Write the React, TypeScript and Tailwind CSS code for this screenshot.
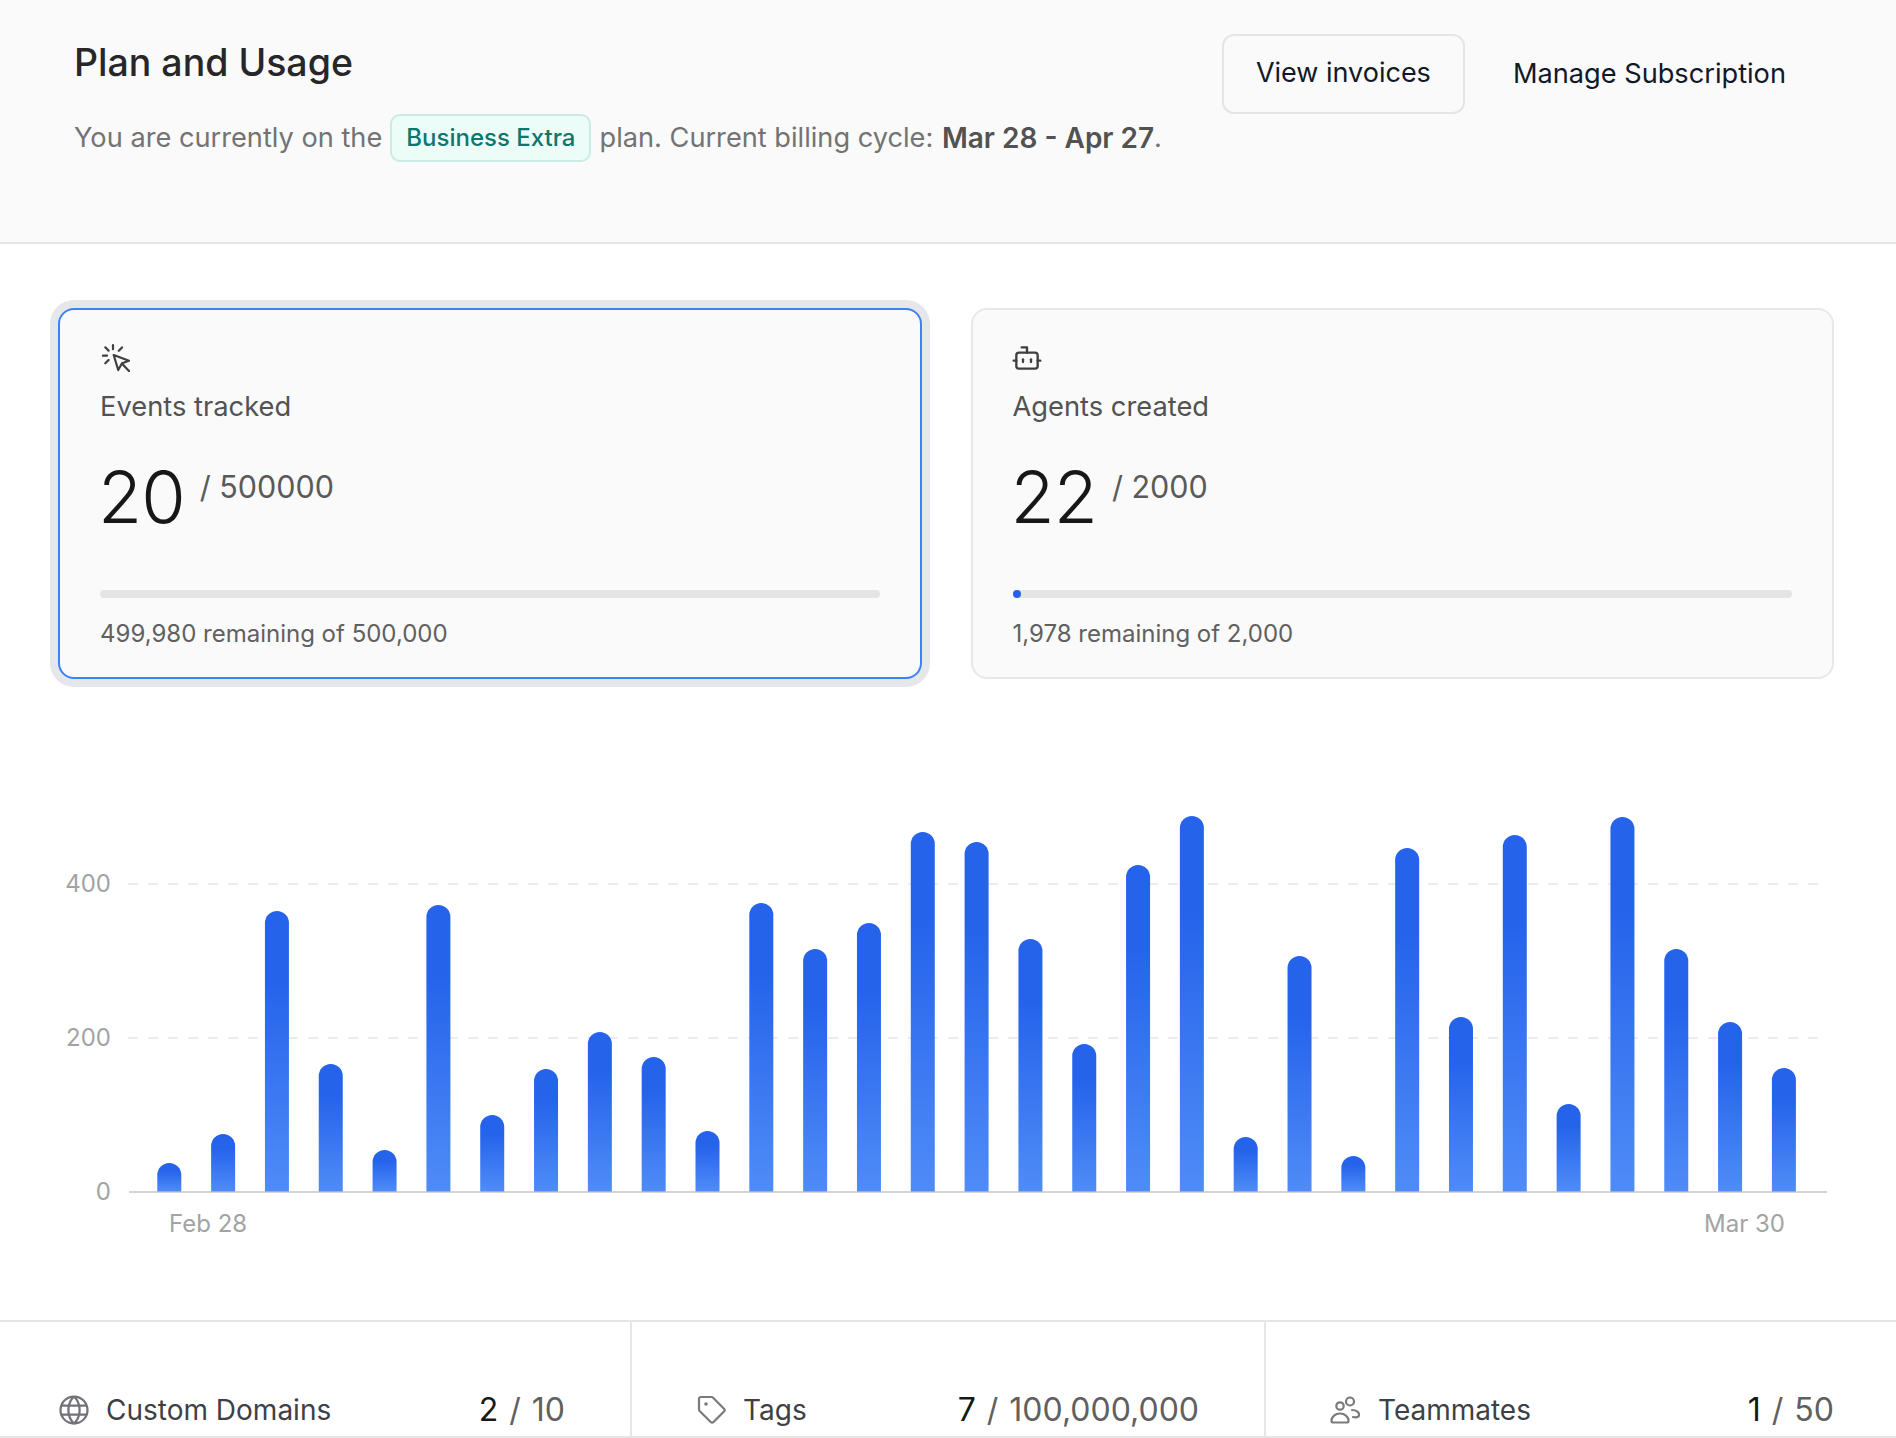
import { Bot } from "lucide-react";
import { PiGlobe } from "react-icons/pi";
import { clsx } from "clsx";

const BAR_TOPS = [
	1163, 1134, 911, 1064, 1150, 905, 1115, 1069, 1032, 1057, 1131, 903, 949, 923,
	832, 842, 939, 1044, 865, 816, 1137, 956, 1156, 848, 1017, 835, 1104, 817,
	949, 1022, 1068,
];

const BASELINE = 1192;
const CHART_TOP = 780;

function y(pageY: number) {
	return pageY - CHART_TOP;
}

function ClickIcon() {
	return (
		<svg width={28} height={28} viewBox="0 0 28 28" fill="none" stroke="#3f3f3f" strokeWidth={2.2} strokeLinecap="round" strokeLinejoin="round" className="mt-[2px] ml-[2px]">
			<path d="M11 1.2v4M20 3.4l-3.2 3.4M3.3 3.3l3.3 3.3M.8 11.7h4.2M3.3 19.3 6.6 16" />
			<path d="M11.7 11 27 16.7l-7 2.6-3.8 6.7Z" />
			<path d="m20.3 20 6.7 7" />
		</svg>
	);
}

function TagIcon() {
	return (
		<svg width={30} height={30} viewBox="0 0 30 30" fill="none" stroke="#7a7a7a" strokeWidth={2.2} strokeLinejoin="round" className="shrink-0">
			<path d="M2 4a2 2 0 0 1 2-2h10.5a2 2 0 0 1 1.4.6L27 13.7a2 2 0 0 1 0 2.8L16.5 27a2 2 0 0 1-2.8 0L2.6 16a2 2 0 0 1-.6-1.4Z" />
			<circle cx={9} cy={9} r={1.8} fill="#7a7a7a" stroke="none" />
		</svg>
	);
}

function TeammatesIcon() {
	return (
		<svg width={30} height={30} viewBox="0 0 30 30" fill="none" stroke="#7a7a7a" strokeWidth={2.2} strokeLinecap="round" className="shrink-0">
			<circle cx={20} cy={6.5} r={4} />
			<circle cx={10} cy={11} r={3.7} />
			<path d="M1.5 26c0-4.5 3.8-7.5 8.5-7.5s8.5 3 8.5 7.5c0 1-1 1.5-2 1.5H3.5c-1 0-2-.5-2-1.5Z" />
			<path d="M22 15c4.5 0 7.5 2.5 7 5.5-.3 1.7-3 2.3-6 1.5" />
		</svg>
	);
}

function UsageChart() {
	return (
		<svg width={1896} height={480} className="block" fontFamily="Inter, sans-serif">
			<defs>
				<linearGradient id="bar" x1="0" y1="0" x2="0" y2="1">
					<stop offset="0%" stopColor="#2563eb" />
					<stop offset="25%" stopColor="#2563eb" />
					<stop offset="100%" stopColor="#4f8cf7" />
				</linearGradient>
			</defs>
			{[884, 1038].map((gridY) => (
				<line
					key={gridY}
					x1={128}
					x2={1819}
					y1={y(gridY)}
					y2={y(gridY)}
					stroke="#ebebf0"
					strokeWidth={2}
					strokeDasharray="10 10"
				/>
			))}
			<line x1={129} x2={1827} y1={y(BASELINE)} y2={y(BASELINE)} stroke="#d4d4d8" strokeWidth={2} />
			{BAR_TOPS.map((top, i) => {
				const left = 157.3 + i * 53.82;
				const bottom = y(BASELINE) - 0.5;
				const t = y(top);
				return (
					<path
						key={i}
						d={`M${left} ${bottom}V${t + 12}a12 12 0 0 1 24 0V${bottom}Z`}
						fill="url(#bar)"
					/>
				);
			})}
			<g fill="#a3a3a3" fontSize={24}>
				<text x={111} y={y(892)} textAnchor="end">400</text>
				<text x={111} y={y(1046)} textAnchor="end">200</text>
				<text x={111} y={y(1200)} textAnchor="end">0</text>
				<text x={169} y={y(1232)}>Feb 28</text>
				<text x={1704} y={y(1232)}>Mar 30</text>
			</g>
		</svg>
	);
}

interface UsageCardProps {
	icon: React.ReactNode;
	label: string;
	used: number;
	limit: string;
	remaining: string;
	active?: boolean;
	showDot?: boolean;
}

function UsageCard({ icon, label, used, limit, remaining, active, showDot }: UsageCardProps) {
	return (
		<div
			className={clsx(
				"h-[371px] rounded-[16px] bg-[#fafafa] px-[40px] pt-[32px]",
				active
					? "border-2 border-[#3b82f6] shadow-[0_0_0_8px_#e5e7eb]"
					: "border-2 border-[#e8e8e8]",
			)}
		>
			<div className="flex h-[30px] items-start">{icon}</div>
			<div className="mt-[15px] text-[27.3px] leading-[40px] text-[#525252]">{label}</div>
			<div className="mt-[30px] flex items-start">
				<span className="-ml-[2px] text-[72px] leading-[80px] font-[350] tracking-[-1px] text-[#171717]">{used}</span>
				<span className="mt-[6px] ml-[15px] text-[30.5px] leading-[48px] text-[#5a5a5a]">/ {limit}</span>
			</div>
			<div className="relative mt-[53px] h-[8px] rounded-full bg-[#e5e5e5]">
				{showDot && <div className="absolute top-0 left-0 size-[8px] rounded-full bg-[#2563eb]" />}
			</div>
			<div className="mt-[18px] text-[24px] leading-[36px] text-[#606060]">{remaining}</div>
		</div>
	);
}

interface LimitCellProps {
	icon: React.ReactNode;
	label: string;
	used: number;
	limit: string;
	className: string;
	gap: string;
}

function LimitCell({ icon, label, used, limit, className, gap }: LimitCellProps) {
	return (
		<div className={clsx("flex items-end justify-between pb-[6px]", className)}>
			<div className={clsx("flex items-center text-[28px] leading-[40px] text-[#3f3f46]", gap)}>
				{icon}
				<span>{label}</span>
			</div>
			<div className="-mb-[2px] text-[32px] leading-[44px] [word-spacing:2px] text-[#606060]">
				<span className="text-[#171717]">{used}</span> / {limit}
			</div>
		</div>
	);
}

export default function App() {
	return (
		<div className="h-[1438px] overflow-hidden bg-white font-['Inter',sans-serif]">
			<header className="flex h-[244px] justify-between border-b-2 border-[#e5e5e5] bg-[#fafafa] pt-[34px] pr-[110px] pl-[74px]">
				<div>
					<h1 className="text-[37.5px] leading-[58px] font-medium text-[#27272a]">Plan and Usage</h1>
					<p className="mt-[22px] flex items-center text-[27.2px] leading-[48px] text-[#737373]">
						You are currently on the
						<span className="mx-[8px] flex h-[48px] items-center rounded-[10px] border-2 border-[#c9ebe4] bg-[#ecfdf8] px-[14px] text-[24px] font-medium text-[#0f766e]">
							Business Extra
						</span>
						plan. Current billing cycle:&nbsp;
						<strong className="ml-[1px] text-[28px] font-semibold text-[#525252]">Mar 28 - Apr 27</strong>.
					</p>
				</div>
				<div className="flex items-start gap-[48px]">
					<button
						type="button"
						className="h-[80px] w-[243px] rounded-[12px] border-2 border-[#e5e5e5] pb-[1px] text-[27px] text-[#111827]"
					>
						View invoices
					</button>
					<button type="button" className="h-[80px] pt-[1px] text-[27.2px] text-[#111827]">
						Manage Subscription
					</button>
				</div>
			</header>

			<section className="mt-[64px] grid grid-cols-2 gap-[49px] pr-[62px] pl-[58px]">
				<UsageCard
					active
					icon={<ClickIcon />}
					label="Events tracked"
					used={20}
					limit="500000"
					remaining="499,980 remaining of 500,000"
				/>
				<UsageCard
					showDot
					icon={<Bot size={32} strokeWidth={1.75} color="#3f3f3f" className="-ml-[2px]" />}
					label="Agents created"
					used={22}
					limit="2000"
					remaining="1,978 remaining of 2,000"
				/>
			</section>

			<section className="mt-[101px]">
				<UsageChart />
			</section>

			<section className="mt-[60px] grid h-[118px] grid-cols-[630px_634px_1fr] border-y-2 border-[#e5e5e5]">
				<LimitCell
					className="pr-[65px] pl-[56px]"
					gap="gap-[14px]"
					icon={<PiGlobe size={36} className="shrink-0 text-[#71717a]" />}
					label="Custom Domains"
					used={2}
					limit="10"
				/>
				<LimitCell
					className="border-l-2 border-[#e5e5e5] pr-[65px] pl-[65px]"
					gap="gap-[16px]"
					icon={<TagIcon />}
					label="Tags"
					used={7}
					limit="100,000,000"
				/>
				<LimitCell
					className="border-l-2 border-[#e5e5e5] pr-[62px] pl-[64px]"
					gap="gap-[18px]"
					icon={<TeammatesIcon />}
					label="Teammates"
					used={1}
					limit="50"
				/>
			</section>
		</div>
	);
}
